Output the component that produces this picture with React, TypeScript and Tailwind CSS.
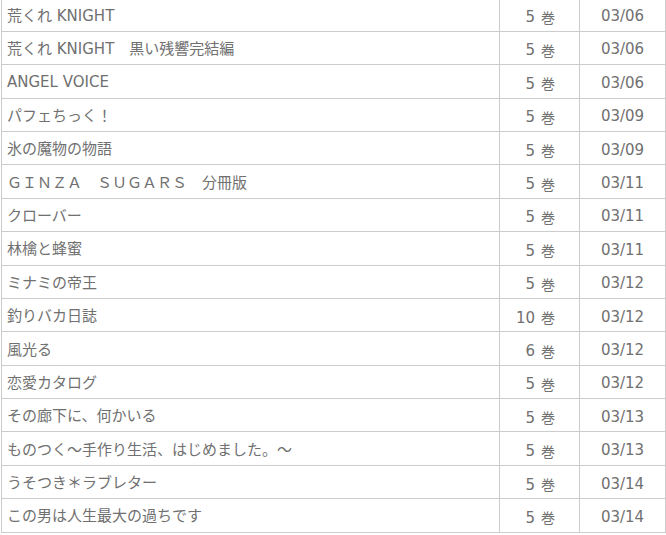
import React from "react";

const rows: [string, string, string][] = [
  ["荒くれ KNIGHT", "5", "03/06"],
  ["荒くれ KNIGHT　黒い残響完結編", "5", "03/06"],
  ["ANGEL VOICE", "5", "03/06"],
  ["パフェちっく！", "5", "03/09"],
  ["氷の魔物の物語", "5", "03/09"],
  ["ＧＩＮＺＡ　ＳＵＧＡＲＳ　分冊版", "5", "03/11"],
  ["クローバー", "5", "03/11"],
  ["林檎と蜂蜜", "5", "03/11"],
  ["ミナミの帝王", "5", "03/12"],
  ["釣りバカ日誌", "10", "03/12"],
  ["風光る", "6", "03/12"],
  ["恋愛カタログ", "5", "03/12"],
  ["その廊下に、何かいる", "5", "03/13"],
  ["ものつく～手作り生活、はじめました。～", "5", "03/13"],
  ["うそつき＊ラブレター", "5", "03/14"],
  ["この男は人生最大の過ちです", "5", "03/14"],
];

export default function App() {
  return (
    <div
      className="w-[666px] h-[535px] overflow-hidden bg-white text-[#707070]"
      style={{ fontFamily: '"DejaVu Sans", "Noto Sans CJK JP", sans-serif' }}
    >
      <div className="ml-[1px] mt-[-1.6px] w-[665px] border-l border-r border-[#ccc]">
        {rows.map(([title, vol, date], i) => (
          <div key={i} className="flex h-[33.4px] border-b border-[#ccc]">
            <div className="w-[497px] flex items-center pl-[5px] pt-[3px] text-[15px] leading-none whitespace-nowrap">
              {title}
            </div>
            <div className="w-[80px] border-l border-[#ccc] flex items-center justify-end pr-[24px] pt-[6px]">
              <span className="text-[15px] leading-none">{vol}</span>
              <span className="text-[14px] leading-none ml-[6px]">巻</span>
            </div>
            <div className="flex-1 border-l border-[#ccc] flex items-center justify-center text-[15px] leading-none pt-[4px]">
              {date}
            </div>
          </div>
        ))}
      </div>
    </div>
  );
}
